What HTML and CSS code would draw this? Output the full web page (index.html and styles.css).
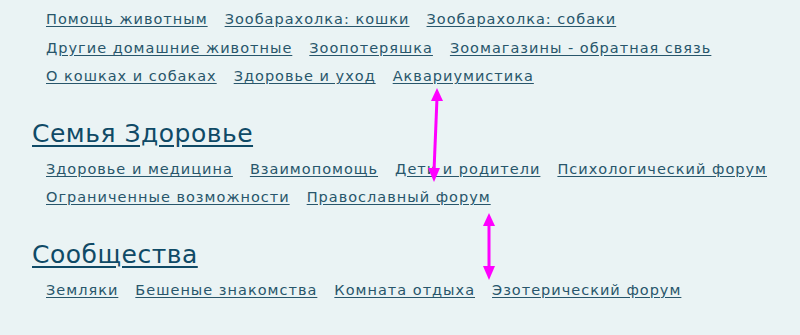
FILE: index.html
```html
<!DOCTYPE html>
<html lang="ru">
<head>
  <meta charset="UTF-8" />
  <title>Форумы</title>
  <link rel="stylesheet" href="styles.css">
</head>
<body>

  <div class="forums">

    <!-- Животные -->
    <div class="links">
      <div class="row">
        <a href="#">Помощь животным</a>
        <a href="#">Зообарахолка: кошки</a>
        <a href="#">Зообарахолка: собаки</a>
      </div>
      <div class="row">
        <a href="#">Другие домашние животные</a>
        <a href="#">Зоопотеряшка</a>
        <a href="#">Зоомагазины - обратная связь</a>
      </div>
      <div class="row">
        <a href="#">О кошках и собаках</a>
        <a href="#">Здоровье и уход</a>
        <a href="#">Аквариумистика</a>
      </div>
    </div>

    <!-- Семья Здоровье -->
    <h2 class="section-title"><a href="#">Семья Здоровье</a></h2>
    <div class="links">
      <div class="row">
        <a href="#">Здоровье и медицина</a>
        <a href="#">Взаимопомощь</a>
        <a href="#">Дети и родители</a>
        <a href="#">Психологический форум</a>
      </div>
      <div class="row">
        <a href="#">Ограниченные возможности</a>
        <a href="#">Православный форум</a>
      </div>
    </div>

    <!-- Сообщества -->
    <h2 class="section-title"><a href="#">Сообщества</a></h2>
    <div class="links">
      <div class="row">
        <a href="#">Земляки</a>
        <a href="#">Бешеные знакомства</a>
        <a href="#">Комната отдыха</a>
        <a href="#">Эзотерический форум</a>
      </div>
    </div>

  </div>

  <!-- Markers -->
  <svg class="marks" width="800" height="335" viewBox="0 0 800 335">
    <g fill="#ff00ff" stroke="#ff00ff">
      <line x1="437" y1="98" x2="434" y2="171" stroke-width="3"/>
      <polygon points="437,88 431,101 443,101" stroke="none"/>
      <polygon points="434,182 428,168 440,168" stroke="none"/>
      <line x1="489" y1="222" x2="489" y2="271" stroke-width="3"/>
      <polygon points="489,213 483,226 495,226" stroke="none"/>
      <polygon points="489,280 483,266 495,266" stroke="none"/>
    </g>
  </svg>

</body>
</html>
```

FILE: styles.css
```css
  body {
    margin: 0;
    padding: 0;
    background: #eaf3f4;
    font-family: 'DejaVu Sans', Verdana, sans-serif;
  }

  .forums {
    padding: 5px 0 0 32px;
  }

  .links {
    padding-left: 14px;
  }

  .row {
    display: flex;
    gap: 17px;
    height: 28.5px;
    align-items: center;
  }

  .row a {
    font-size: 14.5px;
    letter-spacing: 1px;
    color: #28566b;
    text-decoration: underline;
    text-underline-offset: 2px;
  }

  .section-title {
    margin: 0;
    padding: 28px 0 6px;
    font-size: 25px;
    letter-spacing: 0.5px;
    font-weight: normal;
    line-height: 30px;
  }

  .section-title a {
    color: #0f4a66;
    text-decoration: underline;
    text-underline-offset: 3px;
  }

  .marks {
    position: absolute;
    top: 0;
    left: 0;
    pointer-events: none;
  }
```
